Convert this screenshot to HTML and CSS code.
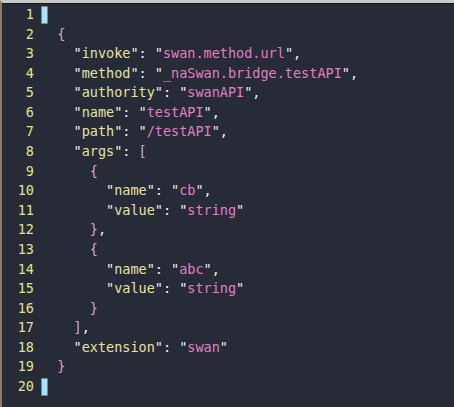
FILE: index.html
```html
<!DOCTYPE html>
<html>
<head>
<meta charset="utf-8">
<link rel="stylesheet" href="styles.css">
</head>
<body>
<div class="editor">
  <div class="line"><span class="ln">1</span><span class="code"><span class="cursor"></span></span></div>
  <div class="line"><span class="ln">2</span><span class="code">  <span class="br">{</span></span></div>
  <div class="line"><span class="ln">3</span><span class="code">    <span class="p">"</span><span class="k">invoke</span><span class="p">": "</span><span class="s">swan.method.url</span><span class="p">",</span></span></div>
  <div class="line"><span class="ln">4</span><span class="code">    <span class="p">"</span><span class="k">method</span><span class="p">": "</span><span class="s">_naSwan.bridge.testAPI</span><span class="p">",</span></span></div>
  <div class="line"><span class="ln">5</span><span class="code">    <span class="p">"</span><span class="k">authority</span><span class="p">": "</span><span class="s">swanAPI</span><span class="p">",</span></span></div>
  <div class="line"><span class="ln">6</span><span class="code">    <span class="p">"</span><span class="k">name</span><span class="p">": "</span><span class="s">testAPI</span><span class="p">",</span></span></div>
  <div class="line"><span class="ln">7</span><span class="code">    <span class="p">"</span><span class="k">path</span><span class="p">": "</span><span class="s">/testAPI</span><span class="p">",</span></span></div>
  <div class="line"><span class="ln">8</span><span class="code">    <span class="p">"</span><span class="k">args</span><span class="p">": </span><span class="br">[</span></span></div>
  <div class="line"><span class="ln">9</span><span class="code">      <span class="br">{</span></span></div>
  <div class="line"><span class="ln">10</span><span class="code">        <span class="p">"</span><span class="k">name</span><span class="p">": "</span><span class="s">cb</span><span class="p">",</span></span></div>
  <div class="line"><span class="ln">11</span><span class="code">        <span class="p">"</span><span class="k">value</span><span class="p">": "</span><span class="s">string</span><span class="p">"</span></span></div>
  <div class="line"><span class="ln">12</span><span class="code">      <span class="br">}</span><span class="p">,</span></span></div>
  <div class="line"><span class="ln">13</span><span class="code">      <span class="br">{</span></span></div>
  <div class="line"><span class="ln">14</span><span class="code">        <span class="p">"</span><span class="k">name</span><span class="p">": "</span><span class="s">abc</span><span class="p">",</span></span></div>
  <div class="line"><span class="ln">15</span><span class="code">        <span class="p">"</span><span class="k">value</span><span class="p">": "</span><span class="s">string</span><span class="p">"</span></span></div>
  <div class="line"><span class="ln">16</span><span class="code">      <span class="br">}</span></span></div>
  <div class="line"><span class="ln">17</span><span class="code">    <span class="br">]</span><span class="p">,</span></span></div>
  <div class="line"><span class="ln">18</span><span class="code">    <span class="p">"</span><span class="k">extension</span><span class="p">": "</span><span class="s">swan</span><span class="p">"</span></span></div>
  <div class="line"><span class="ln">19</span><span class="code">  <span class="br">}</span></span></div>
  <div class="line"><span class="ln">20</span><span class="code"><span class="cursor"></span></span></div>
</div>
</body>
</html>
```

FILE: styles.css
```css
html, body {
  margin: 0;
  padding: 0;
  background: #272a37;
}
.editor {
  box-sizing: border-box;
  width: 454px;
  height: 407px;
  background: #272a37;
  border-top: 3px solid #c9c9c9;
  border-left: 2px solid #8d7c62;
  padding-top: 2px;
  font-family: "DejaVu Sans Mono", monospace;
  font-size: 13.5px;
  color: #f2f2ee;
}
.editor::before {
  content: "";
  display: block;
  height: 1px;
  margin-top: -2px;
  margin-bottom: 1px;
  background: #15171f;
}
.line {
  display: flex;
  height: 19.58px;
  line-height: 19.58px;
  white-space: pre;
}
.ln {
  width: 32px;
  text-align: right;
  color: #e8e08e;
  flex: none;
}
.code {
  display: block;
  margin-left: 7px;
  white-space: pre;
}
.k { color: #e6e2a2; }
.s { color: #e17fc4; }
.p { color: #f2f2ee; }
.br { color: #d9a9b8; }
.cursor {
  display: inline-block;
  box-sizing: border-box;
  width: 7px;
  height: 18px;
  vertical-align: -5px;
  background: #a9e3f5;
  border: 1px solid #5f8ea3;
  border-radius: 1px;
}
```
